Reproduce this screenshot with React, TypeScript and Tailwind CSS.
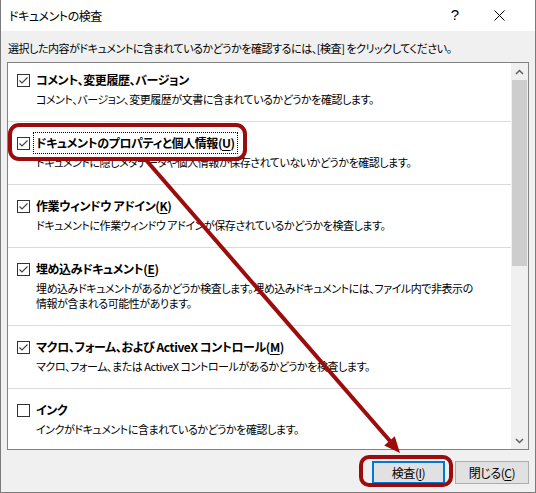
import React from "react";

type Item = {
  title: string;
  accessKey?: string;
  desc: string[];
  checked: boolean;
  focused?: boolean;
};

const items: Item[] = [
  {
    title: "コメント、変更履歴、バージョン",
    desc: ["コメント、バージョン、変更履歴が文書に含まれているかどうかを確認します。"],
    checked: true,
  },
  {
    title: "ドキュメントのプロパティと個人情報",
    accessKey: "U",
    desc: ["ドキュメントに隠しメタデータや個人情報が保存されていないかどうかを確認します。"],
    checked: true,
    focused: true,
  },
  {
    title: "作業ウィンドウ アドイン",
    accessKey: "K",
    desc: ["ドキュメントに作業ウィンドウ アドインが保存されているかどうかを検査します。"],
    checked: true,
  },
  {
    title: "埋め込みドキュメント",
    accessKey: "E",
    desc: [
      "埋め込みドキュメントがあるかどうか検査します。埋め込みドキュメントには、ファイル内で非表示の",
      "情報が含まれる可能性があります。",
    ],
    checked: true,
  },
  {
    title: "マクロ、フォーム、および ActiveX コントロール",
    accessKey: "M",
    desc: ["マクロ、フォーム、または ActiveX コントロールがあるかどうかを検査します。"],
    checked: true,
  },
  {
    title: "インク",
    desc: ["インクがドキュメントに含まれているかどうかを確認します。"],
    checked: false,
  },
];

const Checkbox = ({ checked }: { checked: boolean }) => (
  <svg width="13" height="13" viewBox="0 0 13 13" className="shrink-0">
    <rect x="0.5" y="0.5" width="12" height="12" fill="#fff" stroke="#333" />
    {checked && (
      <path d="M2.5 6.5 L5 9 L10.5 3.5" fill="none" stroke="#444" strokeWidth="1.2" />
    )}
  </svg>
);

const Label = ({ title, accessKey }: { title: string; accessKey?: string }) => (
  <span>
    {title}
    {accessKey && (
      <>
        (<span className="underline underline-offset-2">{accessKey}</span>)
      </>
    )}
  </span>
);

const Row = ({ item, first }: { item: Item; first: boolean }) => (
  <div
    className={`border-b border-[#dadada] pl-[9px] pb-[14px] ${first ? "pt-[9px]" : "pt-[13px]"}`}>
    <div className="flex items-center gap-[6px] h-[16px]">
      <Checkbox checked={item.checked} />
      <div
        className={`font-bold text-[12px] tracking-[-0.4px] leading-[16px] whitespace-nowrap ${
          item.focused ? "outline outline-1 outline-dotted outline-black outline-offset-[2px]" : ""
        }`}>
        <Label title={item.title} accessKey={item.accessKey} />
      </div>
    </div>
    <div className="mt-[4px] pl-[19px] leading-[15px] whitespace-nowrap">
      {item.desc.map((line) => (
        <div key={line}>{line}</div>
      ))}
    </div>
  </div>
);

const Chevron = ({ up }: { up: boolean }) => (
  <svg width="9" height="6" viewBox="0 0 9 6">
    <path
      d={up ? "M1 5 L4.5 1.5 L8 5" : "M1 1 L4.5 4.5 L8 1"}
      fill="none"
      stroke="#606060"
      strokeWidth="1.5"
    />
  </svg>
);

export default function App() {
  return (
    <div className="relative w-[536px] h-[493px] bg-[#f0f0f0] border-x border-b border-[#7a7a7a] flex flex-col text-[11px] tracking-[-0.45px] text-black font-['Noto_Sans_CJK_JP','Noto_Sans',sans-serif] [font-feature-settings:'palt'] overflow-hidden">
      {/* title bar */}
      <div className="h-[31px] bg-white flex items-center pl-[8px] shrink-0">
        <span className="flex-1 text-[12px]">ドキュメントの検査</span>
        <span className="w-[20px] text-center text-[15px] tracking-normal font-['Liberation_Sans',sans-serif] mr-[29px]">?</span>
        <svg width="11" height="11" viewBox="0 0 11 11" className="mr-[30px]">
          <path d="M0.5 0.5 L10.5 10.5 M10.5 0.5 L0.5 10.5" stroke="#000" strokeWidth="1" />
        </svg>
      </div>

      <div className="pl-[7px] pt-[9px] leading-[16px] whitespace-nowrap">
        選択した内容がドキュメントに含まれているかどうかを確認するには、[検査] をクリックしてください。
      </div>

      {/* list */}
      <div className="mx-[6px] mt-[6px] h-[388px] border border-[#828282] bg-white flex shrink-0">
        <div className="flex-1 overflow-hidden">
          {items.map((item, i) => (
            <Row key={item.title} item={item} first={i === 0} />
          ))}
        </div>
        <div className="w-[17px] bg-[#f0f0f0] flex flex-col items-center">
          <div className="h-[17px] flex items-center justify-center">
            <Chevron up />
          </div>
          <div className="w-[15px] h-[186px] bg-[#cdcdcd]" />
          <div className="flex-1" />
          <div className="h-[17px] flex items-center justify-center">
            <Chevron up={false} />
          </div>
        </div>
      </div>

      {/* buttons */}
      <div className="flex justify-end gap-[10px] mx-[6px] mt-[11px] text-[12px]">
        <button className="w-[73px] h-[23px] bg-[#e1e1e1] border-2 border-[#0078d7] leading-[18px]">
          検査(<span className="underline underline-offset-2">I</span>)
        </button>
        <button className="w-[74px] h-[23px] bg-[#e1e1e1] border border-[#adadad] leading-[20px]">
          閉じる(<span className="underline underline-offset-2">C</span>)
        </button>
      </div>

      {/* annotation overlay */}
      <svg
        className="absolute left-[-1px] top-0 pointer-events-none"
        width="536"
        height="493"
        viewBox="0 0 536 493">
        <rect x="10" y="125" width="235" height="34" rx="9" fill="none" stroke="#9c0c0c" strokeWidth="4" />
        <rect x="361" y="457" width="90" height="28" rx="8" fill="none" stroke="#9c0c0c" strokeWidth="4" />
        <line x1="146" y1="160" x2="390" y2="441" stroke="#9c0c0c" strokeWidth="4" />
        <polygon points="400,453 384.2,445.5 394.8,436.3" fill="#9c0c0c" />
      </svg>
    </div>
  );
}
